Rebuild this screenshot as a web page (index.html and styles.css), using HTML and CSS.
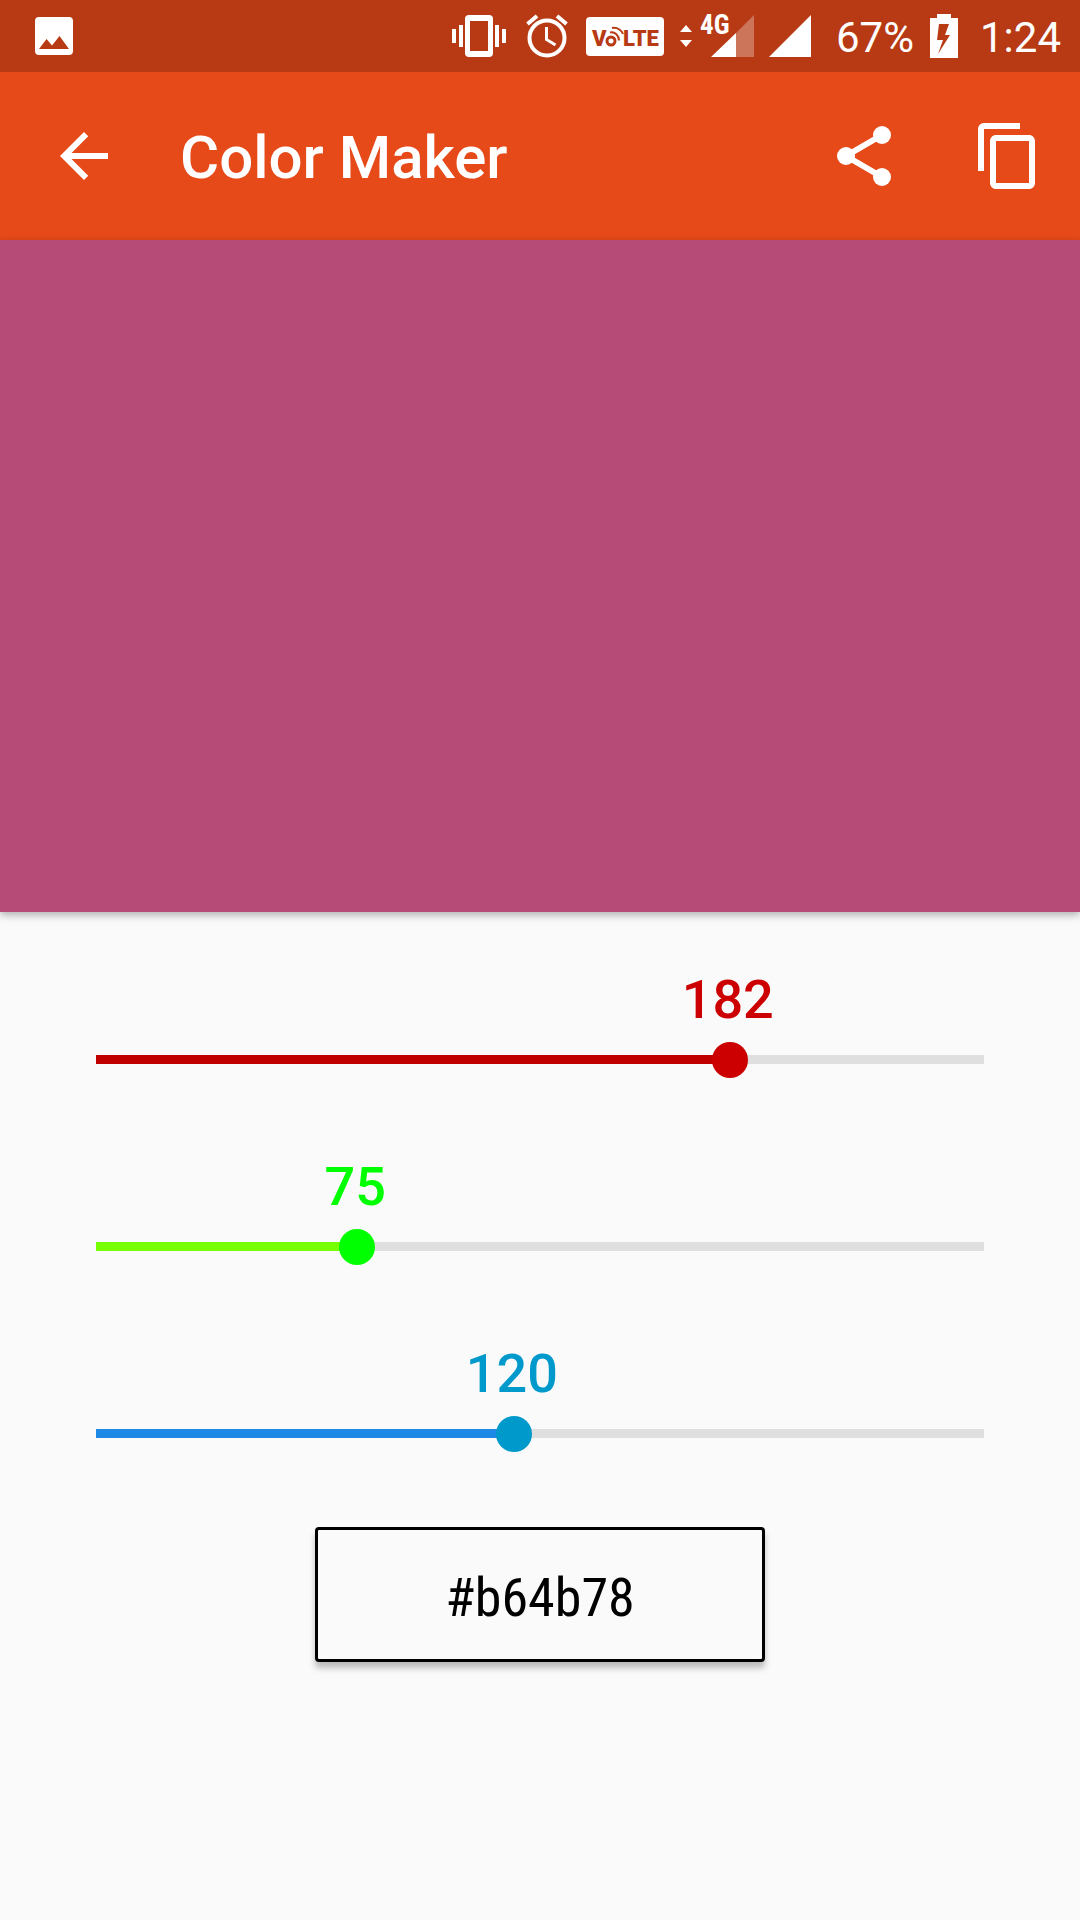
FILE: index.html
```html
<!DOCTYPE html>
<html lang="en">
<head>
<meta charset="utf-8">
<meta name="viewport" content="width=device-width, initial-scale=1">
<title>Color Maker</title>
<link rel="stylesheet" href="styles.css">
</head>
<body>
<div class="status">
  <svg class="picture" width="38" height="38" viewBox="0 0 38 38" aria-hidden="true"><path fill="#fff" fill-rule="evenodd" d="M4 0h30a4 4 0 0 1 4 4v30a4 4 0 0 1-4 4H4a4 4 0 0 1-4-4V4a4 4 0 0 1 4-4zM4 32h30L24.500 19l-7.500 9.500L11.500 22z"/></svg>
  <svg class="vibrate" width="54" height="42" viewBox="0 0 54 42" aria-hidden="true"><path fill="#fff" fill-rule="evenodd" d="M17 0h20a4 4 0 0 1 4 4v34a4 4 0 0 1-4 4H17a4 4 0 0 1-4-4V4a4 4 0 0 1 4-4zM18 6v30h18V6zM0 14h4v14H0zM7 10h4v22H7zM43 10h4v22h-4zM50 14h4v14h-4z"/></svg>
  <svg class="alarm" width="42" height="44" viewBox="0 0 42 44" fill="none" stroke="#fff" aria-hidden="true"><circle cx="21" cy="24" r="17.500" stroke-width="4"/><path stroke-width="3" d="M20.500 13v12.500l9 5.500"/><path stroke-width="4" d="M1.500 10L11 2M31 2l9.500 8"/></svg>
  <svg class="volte" width="78" height="39" viewBox="0 0 78 39" aria-label="VoLTE"><rect width="78" height="39" rx="4" fill="#fff"/><text x="6" y="29">V</text><text x="37" y="29">LTE</text><g fill="none" stroke="#b83a14"><circle cx="25" cy="24" r="4" stroke-width="3"/><path stroke-width="2" d="M24 15.500c5-1 9 3 9 8M26 11c6-1 10 3 11 6"/></g></svg>
  <svg class="traffic" width="12" height="22" viewBox="0 0 12 22" aria-hidden="true"><path fill="#fff" d="M0 7l6-7 6 7zM0 15h12l-6 7z"/></svg>
  <svg class="signal-4g" width="54" height="44" viewBox="0 0 54 44" aria-label="4G signal"><path fill="#fff" fill-opacity=".3" d="M36 19L54 1v42H36z"/><path fill="#fff" d="M11 43l25-24v24z"/><text x="0" y="20">4G</text></svg>
  <svg class="signal" width="42" height="44" viewBox="0 0 42 44" aria-hidden="true"><path fill="#fff" d="M0 43L42 1v42z"/></svg>
  <span class="percent">67%</span>
  <svg class="battery" width="28" height="44" viewBox="0 0 28 44" aria-hidden="true"><path fill="#fff" fill-rule="evenodd" d="M7 0h14v4h7v40H0V4h7zM9 10L7 26h6L8 40l12-19h-5l4-11z"/></svg>
  <time class="clock">1:24</time>
</div>
<header class="appbar">
  <button class="icon-button" aria-label="Back"><svg viewBox="0 0 24 24"><path fill="currentColor" d="M20 11H7.830l5.590-5.590L12 4l-8 8 8 8 1.410-1.410L7.830 13H20z"/></svg></button>
  <h1 class="title">Color Maker</h1>
  <button class="icon-button" aria-label="Share"><svg viewBox="0 0 24 24"><g fill="currentColor"><circle cx="6" cy="12" r="3"/><circle cx="18" cy="5" r="3"/><circle cx="18" cy="19" r="3"/></g><path fill="none" stroke="currentColor" stroke-width="2" d="M18 5L6 12l12 7"/></svg></button>
  <button class="icon-button" aria-label="Copy"><svg viewBox="0 0 24 24"><path fill="currentColor" d="M16 1H4c-1.100 0-2 .9-2 2v14h2V3h12zM19 5H8c-1.100 0-2 .9-2 2v14c0 1.100.9 2 2 2h11c1.100 0 2-.9 2-2V7c0-1.100-.9-2-2-2zm0 16H8V7h11z"/></svg></button>
</header>
<div class="swatch"></div>
<main class="controls">
  <div class="sliders">
    <div class="channel red" style="--pos: 71.37%">
      <output class="value" for="red">182</output>
      <div class="track"><input class="range" id="red" type="range" min="0" max="255" value="182" aria-label="Red"></div>
    </div>
    <div class="channel green" style="--pos: 29.41%">
      <output class="value" for="green">75</output>
      <div class="track"><input class="range" id="green" type="range" min="0" max="255" value="75" aria-label="Green"></div>
    </div>
    <div class="channel blue" style="--pos: 47.06%">
      <output class="value" for="blue">120</output>
      <div class="track"><input class="range" id="blue" type="range" min="0" max="255" value="120" aria-label="Blue"></div>
    </div>
  </div>
  <button class="hex">#b64b78</button>
</main>
</body>
</html>
```
FILE: styles.css
```css
* { box-sizing: border-box; }

body {
  margin: 0;
  min-height: 100vh;
  background: #fafafa;
  font-family: Roboto, sans-serif;
}

svg { display: block; flex: none; overflow: visible; }

.status {
  display: flex;
  align-items: center;
  height: 72px;
  padding: 0 19px 0 35px;
  background: #b83a14;
  color: #fff;
  font-size: 42px;
  line-height: 72px;
}
.picture { margin-right: auto; }
.alarm { margin-left: 20px; }
.volte { margin-left: 18px; }
.volte text {
  fill: #b83a14;
  font: 900 22px Roboto, sans-serif;
}
.traffic { margin: 0 8px 0 16px; }
.signal-4g text {
  fill: #fff;
  font: 700 27px "Roboto Condensed", "Liberation Sans Narrow", Roboto, sans-serif;
}
.signal { margin-left: 15px; }
.percent { margin-left: 25px; }
.battery { margin: 0 22px 0 16px; }
.percent, .clock { padding-top: 3px; }

.appbar {
  display: flex;
  align-items: center;
  height: 168px;
  padding: 0 36px 0 48px;
  background: #e64a19;
  color: #fff;
}
.icon-button {
  width: 72px;
  height: 72px;
  padding: 0;
  border: 0;
  background: none;
  color: inherit;
}
.icon-button + .icon-button { margin-left: 72px; }
.title {
  flex: 1;
  margin: 0 0 0 60px;
  padding-top: 4px;
  font-size: 60px;
  font-weight: 500;
  line-height: 72px;
}

.swatch {
  height: 35vh;
  background: #b64b78;
  box-shadow: 0 3px 8px rgba(0, 0, 0, .3);
}

.controls {
  display: flex;
  flex-direction: column;
  align-items: center;
  padding: 56px 96px;
}
.sliders {
  display: flex;
  flex-direction: column;
  align-self: stretch;
  gap: 77px;
  margin-bottom: 75px;
}
.channel {
  display: flex;
  flex-direction: column;
  gap: 10px;
}
.red { --thumb: #c00; --fill: #c00000; }
.green { --thumb: #0f0; --fill: #76ff03; }
.blue { --thumb: #09c; --fill: #1e88e5; }
.value {
  width: 96px;
  margin-left: calc(var(--pos) - 50px);
  color: var(--thumb);
  font-size: 54px;
  font-weight: 500;
  line-height: 64px;
  text-align: center;
}
.track {
  height: 36px;
  background: linear-gradient(to right, var(--fill) var(--pos), #dfdfdf var(--pos)) 0 13px / 100% 9px no-repeat;
}
.range {
  -webkit-appearance: none;
  appearance: none;
  display: block;
  width: calc(100% + 36px);
  height: 36px;
  margin: 0 -18px;
  background: none;
}
.range::-webkit-slider-thumb {
  -webkit-appearance: none;
  width: 36px;
  height: 36px;
  border-radius: 50%;
  background: var(--thumb);
}

.hex {
  min-width: 450px;
  height: 135px;
  padding: 5px 24px 0;
  border: 3px solid #000;
  border-radius: 4px;
  background: #fafafa;
  box-shadow: 0 6px 6px rgba(0, 0, 0, .25);
  color: #000;
  font: 54px "Roboto Condensed", "Liberation Sans Narrow", Roboto, sans-serif;
}
```
